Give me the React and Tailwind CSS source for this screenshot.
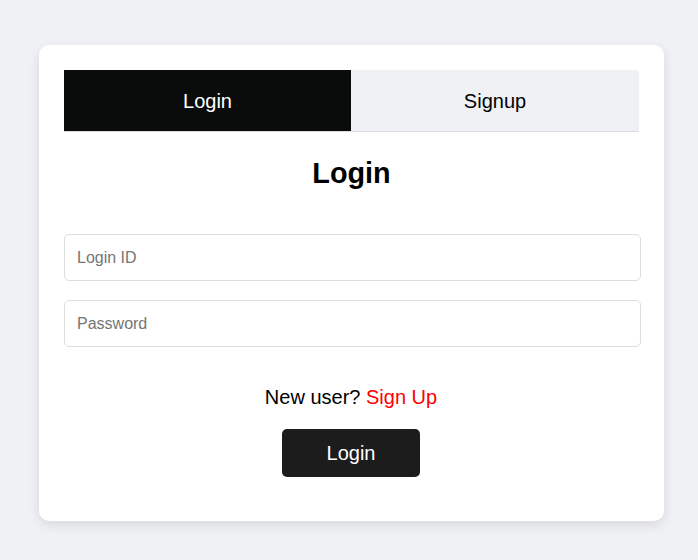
import { useState } from "react";

const App = () => {
    const [tab, setTab] = useState("login");

    return (
        <div className="min-h-screen w-full bg-[#f0f1f5] pt-[45px] pl-[39px]" style={{ fontFamily: '"Liberation Sans", Arial, sans-serif' }}>
            <div className="w-[625px] rounded-[10px] bg-white px-[25px] pt-[25px] pb-[44px] shadow-[0_4px_12px_rgba(0,0,0,0.1)]">
                {/* tabs */}
                <div className="flex w-[575px] h-[62px] border-b border-[#dcdcdf]">
                    <button
                        type="button"
                        onClick={() => setTab("login")}
                        className={`w-[287px] flex items-center justify-center text-[20px] ${tab === "login" ? "bg-[#0a0c0b] text-white" : "bg-[#f0f1f5] text-black"}`}
                    >
                        Login
                    </button>
                    <button
                        type="button"
                        onClick={() => setTab("signup")}
                        className={`flex-1 flex items-center justify-center text-[20px] ${tab === "signup" ? "bg-[#0a0c0b] text-white" : "bg-[#f0f1f5] text-black"}`}
                    >
                        Signup
                    </button>
                </div>

                <h2 className="mt-[24px] w-[575px] text-center text-[28.8px] leading-[34px] font-bold text-black">Login</h2>

                <form className="mt-[44px] flex flex-col gap-[19px]" onSubmit={(e) => e.preventDefault()}>
                    <input
                        type="text"
                        placeholder="Login ID"
                        className="w-[577px] h-[47px] rounded-[5px] border border-[#dddddd] px-[12px] text-[16px] text-black placeholder-[#757575] outline-none"
                    />
                    <input
                        type="password"
                        placeholder="Password"
                        className="w-[577px] h-[47px] rounded-[5px] border border-[#dddddd] px-[12px] text-[16px] text-black placeholder-[#757575] outline-none"
                    />
                </form>

                <p className="mt-[38px] w-[574px] text-center text-[20px] leading-[24px] text-black">
                    New user? <span className="text-[#ff0000] cursor-pointer">Sign Up</span>
                </p>

                <div className="mt-[20px] w-[574px] flex justify-center">
                    <button
                        type="submit"
                        className="w-[138px] h-[48px] rounded-[5px] bg-[#1c1c1c] text-white text-[20px]"
                    >
                        Login
                    </button>
                </div>
            </div>
        </div>
    );
};

export default App;
